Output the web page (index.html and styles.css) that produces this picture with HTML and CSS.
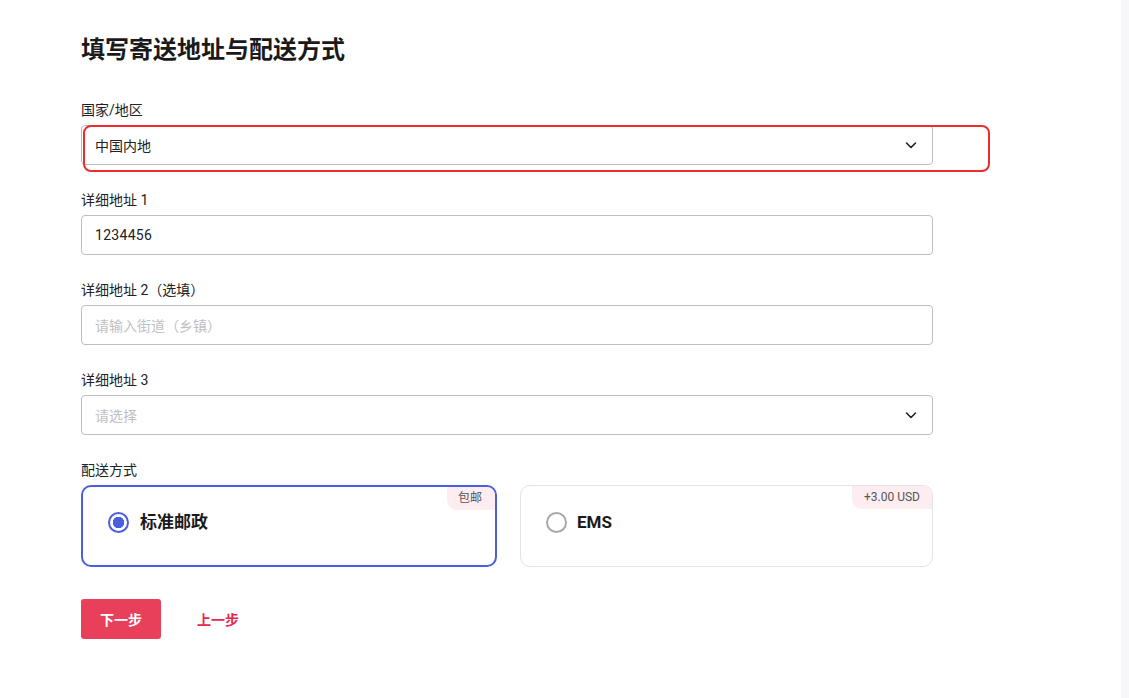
FILE: index.html
```html
<!DOCTYPE html>
<html lang="zh-CN">
<head>
    <meta charset="UTF-8">
    <meta name="viewport" content="width=device-width, initial-scale=1.0">
    <title>填写寄送地址与配送方式</title>
    <link rel="stylesheet" href="styles.css">
</head>
<body>
    <div class="page">
        <main class="checkout">
            <h1 class="title">填写寄送地址与配送方式</h1>

            <div class="field field-marked">
                <label class="label">国家/地区</label>
                <div class="select">
                    <span class="value">中国内地</span>
                    <svg class="chevron" width="14" height="14" viewBox="0 0 14 14"><path d="M2.5 5l4.5 4.5L11.5 5" fill="none" stroke="#222" stroke-width="1.6" stroke-linecap="round" stroke-linejoin="round"/></svg>
                </div>
                <div class="marker"></div>
            </div>

            <div class="field">
                <label class="label">详细地址 1</label>
                <div class="input"><span class="value num">1234456</span></div>
            </div>

            <div class="field">
                <label class="label">详细地址 2（选填）</label>
                <div class="input"><span class="placeholder">请输入街道（乡镇）</span></div>
            </div>

            <div class="field">
                <label class="label">详细地址 3</label>
                <div class="select">
                    <span class="placeholder">请选择</span>
                    <svg class="chevron" width="14" height="14" viewBox="0 0 14 14"><path d="M2.5 5l4.5 4.5L11.5 5" fill="none" stroke="#222" stroke-width="1.6" stroke-linecap="round" stroke-linejoin="round"/></svg>
                </div>
            </div>

            <div class="field">
                <label class="label">配送方式</label>
                <div class="options">
                    <div class="option selected">
                        <span class="radio"></span>
                        <span class="option-name">标准邮政</span>
                        <span class="tag">包邮</span>
                    </div>
                    <div class="option">
                        <span class="radio"></span>
                        <span class="option-name">EMS</span>
                        <span class="tag">+3.00 USD</span>
                    </div>
                </div>
            </div>

            <div class="actions">
                <button class="btn-next">下一步</button>
                <button class="btn-back">上一步</button>
            </div>
        </main>
        <div class="scroll-strip"></div>
    </div>
</body>
</html>
```

FILE: styles.css
```css
body {
    margin: 0;
    padding: 0;
    background: #fff;
    color: #222;
    font-family: Roboto, "Noto Sans CJK SC", sans-serif;
    font-size: 14px;
}

.page {
    display: flex;
    min-height: 698px;
}

.checkout {
    flex: 1;
    padding: 36px 0 0 81px;
}

.scroll-strip {
    width: 8px;
    background: #f7f7f9;
}

.title {
    margin: 0 0 36px;
    font-size: 24px;
    line-height: 28px;
    font-weight: 700;
    color: #1a1a1a;
}

.field {
    position: relative;
    width: 852px;
    margin-bottom: 25px;
}

.label {
    display: block;
    height: 20px;
    line-height: 20px;
    margin-bottom: 5px;
    color: #222;
}

.input, .select {
    box-sizing: border-box;
    height: 40px;
    border: 1px solid #bdbdbd;
    border-radius: 4px;
    display: flex;
    align-items: center;
    padding: 0 14px 0 13px;
}

.select {
    justify-content: space-between;
}

.value {
    color: #222;
}

.num {
    letter-spacing: 0.3px;
}

.placeholder {
    color: #bfbfbf;
}

.chevron {
    display: block;
}

/* red annotation frame */
.marker {
    position: absolute;
    left: 2px;
    top: 25px;
    width: 907px;
    height: 47px;
    box-sizing: border-box;
    border: 2.5px solid #ee2c2c;
    border-radius: 8px;
}

.options {
    display: flex;
    gap: 23px;
}

.option {
    position: relative;
    box-sizing: border-box;
    height: 82px;
    flex: 0 0 416px;
    border: 1px solid #e3e3e3;
    border-radius: 10px;
    display: flex;
    align-items: flex-start;
    padding: 26px 0 0 25px;
}

.option + .option {
    flex: 1;
}

.option.selected {
    border: 2px solid #4a5fe0;
    padding: 25px 0 0 25px;
}

.radio {
    box-sizing: border-box;
    width: 21px;
    height: 21px;
    border: 2px solid #a8a8a8;
    border-radius: 50%;
    margin-right: 10px;
}

.selected .radio {
    border-color: #4a5fe0;
    background: radial-gradient(circle, #4a5fe0 0 5.5px, #fff 6px);
    margin-right: 11px;
}

.option-name {
    font-size: 17px;
    font-weight: 700;
    line-height: 21px;
    color: #1a1a1a;
}

.tag {
    position: absolute;
    top: 0;
    right: 0;
    height: 23px;
    line-height: 23px;
    padding: 0 12px;
    background: #fdedf1;
    border-radius: 0 9px 0 10px;
    font-size: 12px;
    color: #555;
}

.selected .tag {
    padding: 0 13px 0 11px;
}

.actions {
    display: flex;
    align-items: center;
    gap: 16px;
    margin-top: 32px;
}

.btn-next {
    width: 80px;
    height: 40px;
    border: none;
    border-radius: 3px;
    background: #e8405a;
    color: #fff;
    font-family: inherit;
    font-size: 14px;
    font-weight: 700;
    cursor: pointer;
}

.btn-back {
    border: none;
    background: none;
    padding: 0 20px;
    color: #e6284a;
    font-family: inherit;
    font-size: 14px;
    font-weight: 700;
    cursor: pointer;
}
```
